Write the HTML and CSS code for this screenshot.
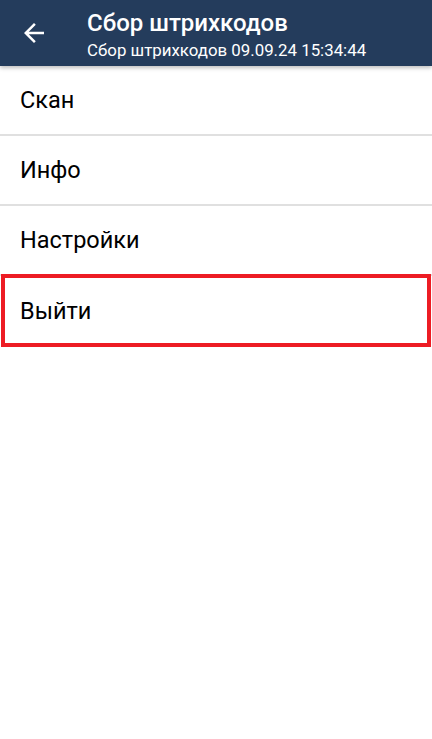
FILE: index.html
```html
<!DOCTYPE html>
<html lang="ru">

<head>
    <meta charset="UTF-8">
    <meta name="viewport" content="width=device-width, initial-scale=1.0">
    <link rel="stylesheet" href="styles.css">
</head>
<body>
    <div class="toolbar">
        <div class="back">
            <svg width="30" height="30" viewBox="0 0 24 24">
                <path d="M20 11H7.83l5.59-5.59L12 4l-8 8 8 8 1.41-1.41L7.83 13H20v-2z" fill="#fff"/>
            </svg>
        </div>
        <div class="titles">
            <div class="title">Сбор штрихкодов</div>
            <div class="subtitle">Сбор штрихкодов 09.09.24 15:34:44</div>
        </div>
    </div>
    <ul class="menu">
        <li>Скан</li>
        <li>Инфо</li>
        <li>Настройки</li>
        <li class="selected">Выйти</li>
    </ul>
</body>

</html>
```

FILE: styles.css
```css
body {
    font-family: Roboto, "Noto Sans", sans-serif;
    background-color: #fff;
    margin: 0;
    padding: 0;
    color: #000;
}

.toolbar {
    height: 66px;
    background-color: #243c5c;
    display: flex;
    align-items: center;
    box-shadow: 0 2px 4px rgba(0, 0, 0, 0.25);
    position: relative;
    color: #fff;
}

.back {
    width: 30px;
    height: 30px;
    margin-left: 19px;
    margin-right: 38px;
}

.back svg {
    display: block;
}

.titles {
    display: flex;
    flex-direction: column;
    align-self: flex-start;
    padding-top: 9px;
}

.title {
    font-size: 24px;
    font-weight: 500;
    line-height: 28px;
}

.subtitle {
    font-size: 16.85px;
    line-height: 20px;
    margin-top: 3px;
}

.menu {
    list-style: none;
    margin: 0;
    padding: 0;
}

.menu li {
    height: 68px;
    display: flex;
    align-items: center;
    padding-left: 20px;
    font-size: 23.5px;
    border-bottom: 2px solid #e0e0e0;
}

.menu li.selected {
    border: 4px solid #ed1c24;
    height: 65px;
    margin: -2px 1px 0 1px;
    padding-left: 15px;
}
```
